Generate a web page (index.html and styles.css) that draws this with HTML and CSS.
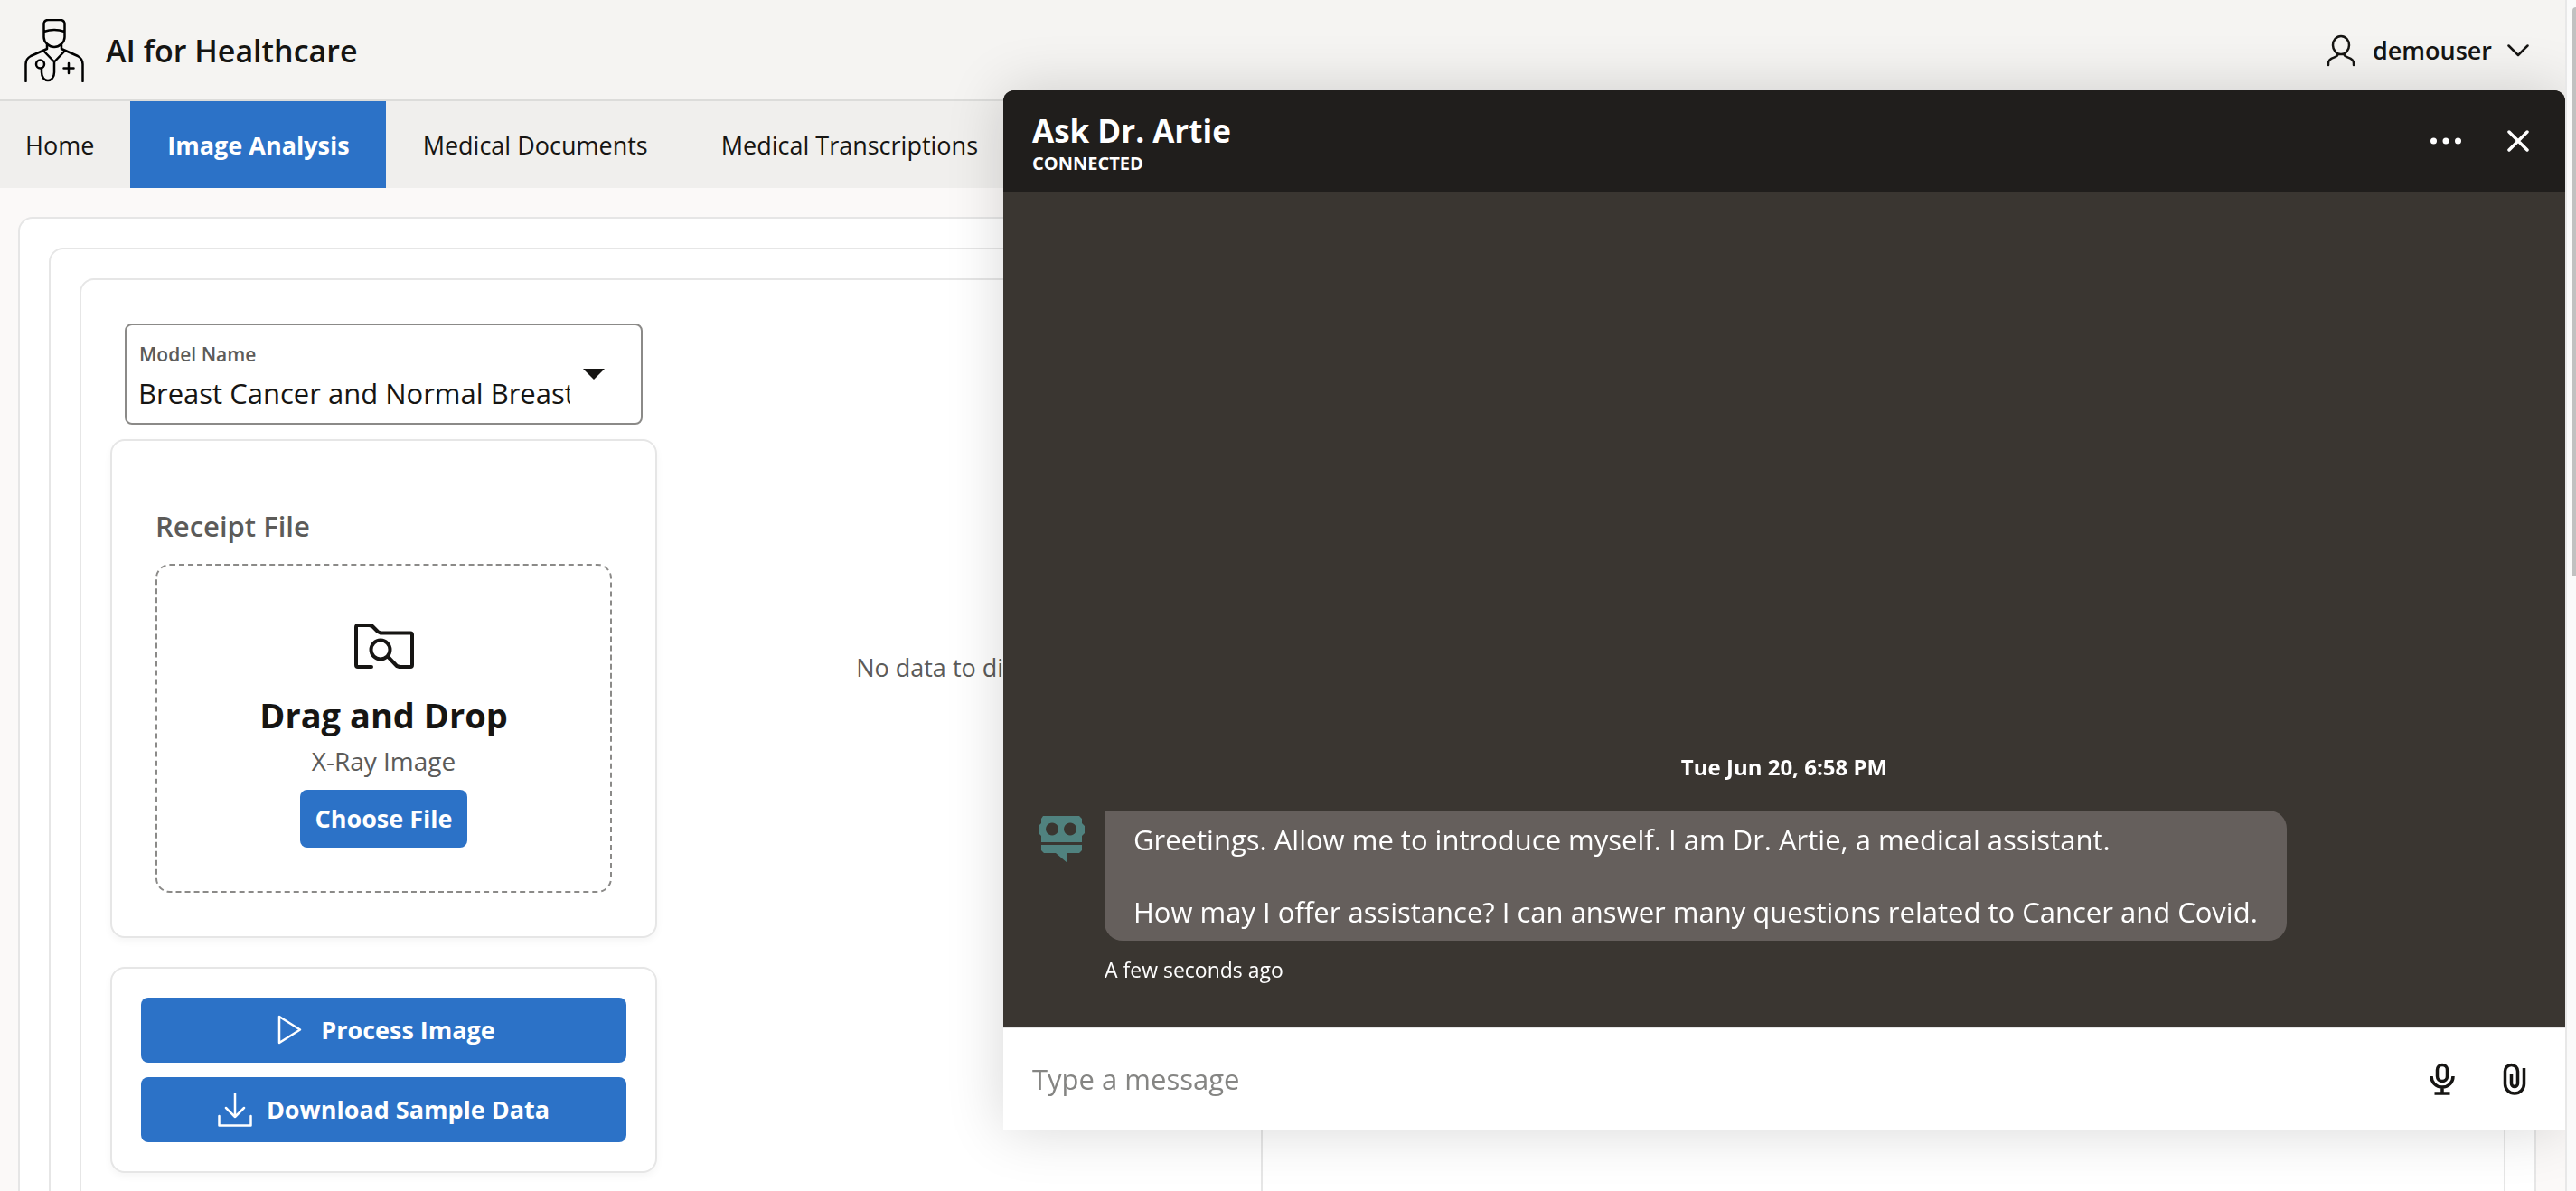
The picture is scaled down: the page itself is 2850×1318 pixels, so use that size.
FILE: index.html
```html
<!DOCTYPE html>
<html lang="en">
<head>
<meta charset="utf-8">
<title>AI for Healthcare</title>
<link rel="stylesheet" href="styles.css">
</head>
<body>
<div class="app">
  <header class="topbar">
    <svg class="logo" viewBox="0 0 66 70" fill="none" stroke="#000" stroke-width="2.500" stroke-linecap="round" stroke-linejoin="round" aria-hidden="true">
      <path d="M21.500 14V6q0-5 5-5h13q5 0 5 5v14c0 6-6 11-11.500 11s-11.500-5-11.500-11v-6q11.500-4 23 0M25 28v5L7 41q-5.500 3-5.500 9v19M41 28v5l18 8q5.500 3 5.500 9v19M21 35l12 12.500L45 35M33 47.500V59c0 12-14 12-14 0v-4.500"/>
      <circle cx="17.500" cy="50" r="4.500"/><path d="M49 49v11M43.500 54.500h11"/>
    </svg>
    <h1 class="brand">AI for Healthcare</h1>
    <button class="user" type="button">
      <svg class="user-icon" viewBox="0 0 32 36" fill="none" stroke="#161513" stroke-width="2.500" stroke-linecap="round" aria-hidden="true"><ellipse cx="16" cy="12" rx="9" ry="10"/><path d="M12.500 22c0 5-10.500 2-10.500 10v2M19.500 22c0 5 10.500 2 10.500 10v2"/></svg>
      <span>demouser</span>
      <svg class="chevron" viewBox="0 0 24 14" fill="none" stroke="#161513" stroke-width="2.500" stroke-linecap="round" stroke-linejoin="round" aria-hidden="true"><path d="M1.500 1.500l10.500 10.500L22.500 1.500"/></svg>
    </button>
  </header>
  <nav class="tabs">
    <a class="tab" href="#home">Home</a>
    <a class="tab tab-active" href="#image" aria-current="page">Image Analysis</a>
    <a class="tab" href="#documents">Medical Documents</a>
    <a class="tab" href="#transcriptions">Medical Transcriptions</a>
  </nav>
  <main class="panel outer">
    <div class="panel columns">
      <section class="panel analysis">
        <div class="controls">
          <div class="field">
            <label for="model">Model Name</label>
            <select id="model"><option>Breast Cancer and Normal Breast Tissue</option></select>
          </div>
          <div class="panel upload">
            <h2 class="upload-title">Receipt File</h2>
            <div class="dropzone">
              <svg class="folder" viewBox="0 0 66 50" fill="none" stroke="#161513" stroke-width="4" stroke-linecap="round" stroke-linejoin="round" aria-hidden="true"><path d="M19 48H4q-2 0-2-2V4q0-2 2-2h13l3 1 6 6 3 1.500h33q2 0 2 2V46q0 2-2 2H50l-3-1-10-10.500"/><circle cx="29" cy="29" r="10.500"/></svg>
              <h3 class="drop-title">Drag and Drop</h3>
              <p class="drop-note">X-Ray Image</p>
              <button class="btn choose" type="button">Choose File</button>
            </div>
          </div>
          <div class="panel actions">
            <button class="btn" type="button">
              <svg class="play" viewBox="0 0 38 38" fill="none" stroke="#fff" stroke-width="2.500" stroke-linejoin="round" aria-hidden="true"><path d="M8 4v29l23-14.500z"/></svg>
              Process Image
            </button>
            <button class="btn" type="button">
              <svg class="download" viewBox="0 0 38 38" fill="none" stroke="#fff" stroke-width="2.500" stroke-linecap="round" stroke-linejoin="round" aria-hidden="true"><path d="M19 1v26M9 17l10 10 10-10M1.500 26v10.500h35V26"/></svg>
              Download Sample Data
            </button>
          </div>
        </div>
        <p class="empty">No data to display</p>
      </section>
    </div>
  </main>
</div>
<div class="scroll-track" aria-hidden="true"><div class="scroll-thumb"></div></div>
<aside class="chat" aria-label="Ask Dr. Artie">
  <header class="chat-head">
    <div class="chat-titles">
      <h2 class="chat-title">Ask Dr. Artie</h2>
      <p class="chat-status">CONNECTED</p>
    </div>
    <button class="icon-btn" type="button" aria-label="More options"><svg viewBox="0 0 48 48" fill="#fff"><circle cx="10.500" cy="24" r="3.500"/><circle cx="24" cy="24" r="3.500"/><circle cx="37.500" cy="24" r="3.500"/></svg></button>
    <button class="icon-btn" type="button" aria-label="Close"><svg viewBox="0 0 48 48" fill="none" stroke="#fff" stroke-width="3.500" stroke-linecap="round"><path d="M14 14l20 20M34 14L14 34"/></svg></button>
  </header>
  <div class="chat-body">
    <p class="chat-date">Tue Jun 20, 6:58 PM</p>
    <div class="message">
      <svg class="avatar" viewBox="0 0 52 52" fill="#50827f" fill-rule="evenodd" aria-hidden="true"><path d="M6 0h40l3 3v5l3 3v8l-3 3v7H4v-7l-3-3v-8l3-3V3zM16 7.500a7 7 0 1 0 .1 0zM36 7.500a7 7 0 1 0 .1 0zM4 32h45v6l-3 3H33v11L20 41H7l-3-3z"/></svg>
      <div class="bubble"><p>Greetings. Allow me to introduce myself. I am Dr. Artie, a medical assistant.</p><p>How may I offer assistance? I can answer many questions related to Cancer and Covid.</p></div>
    </div>
    <p class="chat-age">A few seconds ago</p>
  </div>
  <form class="chat-form">
    <input class="chat-input" type="text" placeholder="Type a message" aria-label="Type a message">
    <button class="icon-btn" type="button" aria-label="Speak"><svg viewBox="0 0 48 48" fill="none" stroke="#161513" stroke-width="3.500"><rect x="18.500" y="8.500" width="11" height="18" rx="5.500"/><path d="M12 21c0 7 5 12 12 12s12-5 12-12M24 33v7M15.500 40h17"/></svg></button>
    <button class="icon-btn" type="button" aria-label="Attach file"><svg viewBox="0 0 48 48" fill="none" stroke="#161513" stroke-width="3.500"><path d="M34.500 12v17.500a10.500 10.500 0 0 1-21 0V15.500a7 7 0 0 1 14 0V29a3 3 0 0 1-7 0V18"/></svg></button>
  </form>
</aside>
</body>
</html>
```
FILE: styles.css
```css
* {
  box-sizing: border-box;
}

body {
  margin: 0;
  height: 100vh;
  overflow: hidden;
  background: #fbf9f8;
  color: #161513;
  font: 27px/40px "Open Sans", "Noto Sans", sans-serif;
}

h1, h2, h3, p {
  margin: 0;
  font-weight: 600;
}

p {
  font-weight: 400;
}

button, input, select {
  font: inherit;
  color: inherit;
}

button {
  border: 0;
  padding: 0;
  background: none;
}

.app {
  margin-right: 12px;
}

.topbar {
  display: flex;
  align-items: center;
  height: 112px;
  padding: 2px 40px 0 27px;
  border-bottom: 2px solid #dcdcda;
  background: #f5f4f2;
}

.logo {
  width: 66px;
  height: 70px;
}

.brand {
  margin-left: 24px;
  font-size: 34px;
}

.user {
  display: flex;
  align-items: center;
  margin-left: auto;
  font-weight: 600;
}

.user-icon {
  width: 32px;
  height: 36px;
}

.user span {
  margin: 0 17px 0 19px;
}

.chevron {
  width: 24px;
  height: 14px;
}

.tabs {
  display: flex;
  height: 96px;
  background: #f0efed;
}

.tab {
  display: flex;
  align-items: center;
  padding: 2px 40px 0 41px;
  color: inherit;
  text-decoration: none;
}

.tab:first-child {
  padding-left: 28px;
}

.tab-active {
  background: #2c72c7;
  color: #fff;
  font-weight: 700;
}

.panel {
  padding: 32px;
  border: 2px solid #e6e6e6;
  border-radius: 16px;
  background: #fff;
}

.outer {
  margin: 32px 32px 32px 20px;
}

.columns {
  display: grid;
  grid-template-columns: 1fr 1fr;
  gap: 32px;
}

.analysis {
  display: flex;
  gap: 32px;
  min-height: 1200px;
  padding-top: 48px;
}

.controls {
  width: 605px;
}

.field {
  position: relative;
  margin: 0 16px 16px;
}

.field label {
  position: absolute;
  top: 18px;
  left: 16px;
  color: #5c5b59;
  font-size: 21px;
  font-weight: 600;
  line-height: 32px;
}

.field select {
  display: block;
  width: 100%;
  height: 112px;
  padding: 42px 78px 0 13px;
  appearance: none;
  border: 2px solid #8b8a88;
  border-radius: 8px;
  background: #fff;
  font-size: 31px;
}

.field::after {
  content: "";
  position: absolute;
  top: 50px;
  right: 42px;
  border: 12px solid transparent;
  border-top-color: #161513;
  border-bottom: 0;
}

.upload {
  margin-bottom: 32px;
  padding: 72px 48px 48px;
  box-shadow: 0 4px 8px rgba(0, 0, 0, .04);
}

.upload-title {
  margin-bottom: 20px;
  color: #5c5b59;
  font-size: 31px;
  line-height: 44px;
}

.dropzone {
  display: flex;
  flex-direction: column;
  align-items: center;
  padding: 64px 0 48px;
  border: 2px dashed #8b8a88;
  border-radius: 16px;
}

.folder {
  width: 66px;
  height: 50px;
}

.drop-title {
  margin: 22px 0 2px;
  font-size: 38px;
  font-weight: 700;
  line-height: 58px;
}

.drop-note {
  margin-bottom: 12px;
  color: #5c5b59;
  font-size: 28px;
}

.btn {
  display: flex;
  align-items: center;
  justify-content: center;
  gap: 16px;
  width: 100%;
  height: 72px;
  border-radius: 8px;
  background: #2c72c7;
  color: #fff;
  font-weight: 700;
}

.choose {
  width: auto;
  height: 64px;
  padding: 0 16px;
}

.actions {
  display: grid;
  gap: 16px;
  box-shadow: 0 4px 8px rgba(0, 0, 0, .04);
}

.play, .download {
  width: 38px;
  height: 38px;
}

.empty {
  flex: 1;
  padding-top: 361px;
  color: #5c5b59;
  text-align: center;
}

.scroll-track {
  position: fixed;
  inset: 0 0 0 auto;
  width: 12px;
  padding: 8px 0 0 6px;
  border-left: 2px solid #e8e8e8;
  background: #fafafa;
}

.scroll-thumb {
  height: 48%;
  border-top-left-radius: 8px;
  background: #c1c1c1;
}

.chat {
  position: fixed;
  top: 100px;
  right: 12px;
  bottom: 68px;
  display: flex;
  flex-direction: column;
  width: min(1728px, 100%);
  border-radius: 12px 12px 0 0;
  overflow: hidden;
  background: #3a3631;
  color: #fff;
  clip-path: inset(-100px 0 -68px -100px);
  box-shadow: 0 0 64px rgba(0, 0, 0, .16);
}

.chat-head {
  display: flex;
  align-items: center;
  gap: 32px;
  height: 112px;
  padding: 0 28px 0 32px;
  background: #201e1c;
}

.chat-titles {
  flex: 1;
  padding-top: 6px;
}

.chat-title {
  font-size: 35px;
  font-weight: 700;
  line-height: 44px;
}

.chat-status {
  font-size: 20px;
  font-weight: 700;
  line-height: 28px;
}

.icon-btn, .icon-btn svg {
  display: block;
  width: 48px;
  height: 48px;
}

.chat-body {
  display: flex;
  flex: 1;
  flex-direction: column;
  justify-content: flex-end;
  padding: 0 38px 47px;
}

.chat-date {
  margin-bottom: 28px;
  font-size: 24px;
  font-weight: 700;
  text-align: center;
}

.message {
  display: flex;
  align-items: flex-start;
  gap: 22px;
}

.avatar {
  width: 52px;
  height: 52px;
  margin-top: 6px;
}

.bubble {
  display: grid;
  gap: 40px;
  padding: 12px 32px;
  border-radius: 4px 20px 20px 20px;
  background: #655f5c;
  font-size: 31px;
}

.chat-age {
  margin: 16px 0 0 74px;
  font-size: 23px;
  line-height: 32px;
}

.chat-form {
  display: flex;
  align-items: center;
  gap: 32px;
  height: 114px;
  padding: 0 32px;
  border-top: 2px solid #e6e6e6;
  background: #fff;
  color: #161513;
}

.chat-input {
  flex: 1;
  padding: 0;
  border: 0;
  outline: 0;
  font-size: 31px;
}

.chat-input::placeholder {
  color: #858583;
}
```
